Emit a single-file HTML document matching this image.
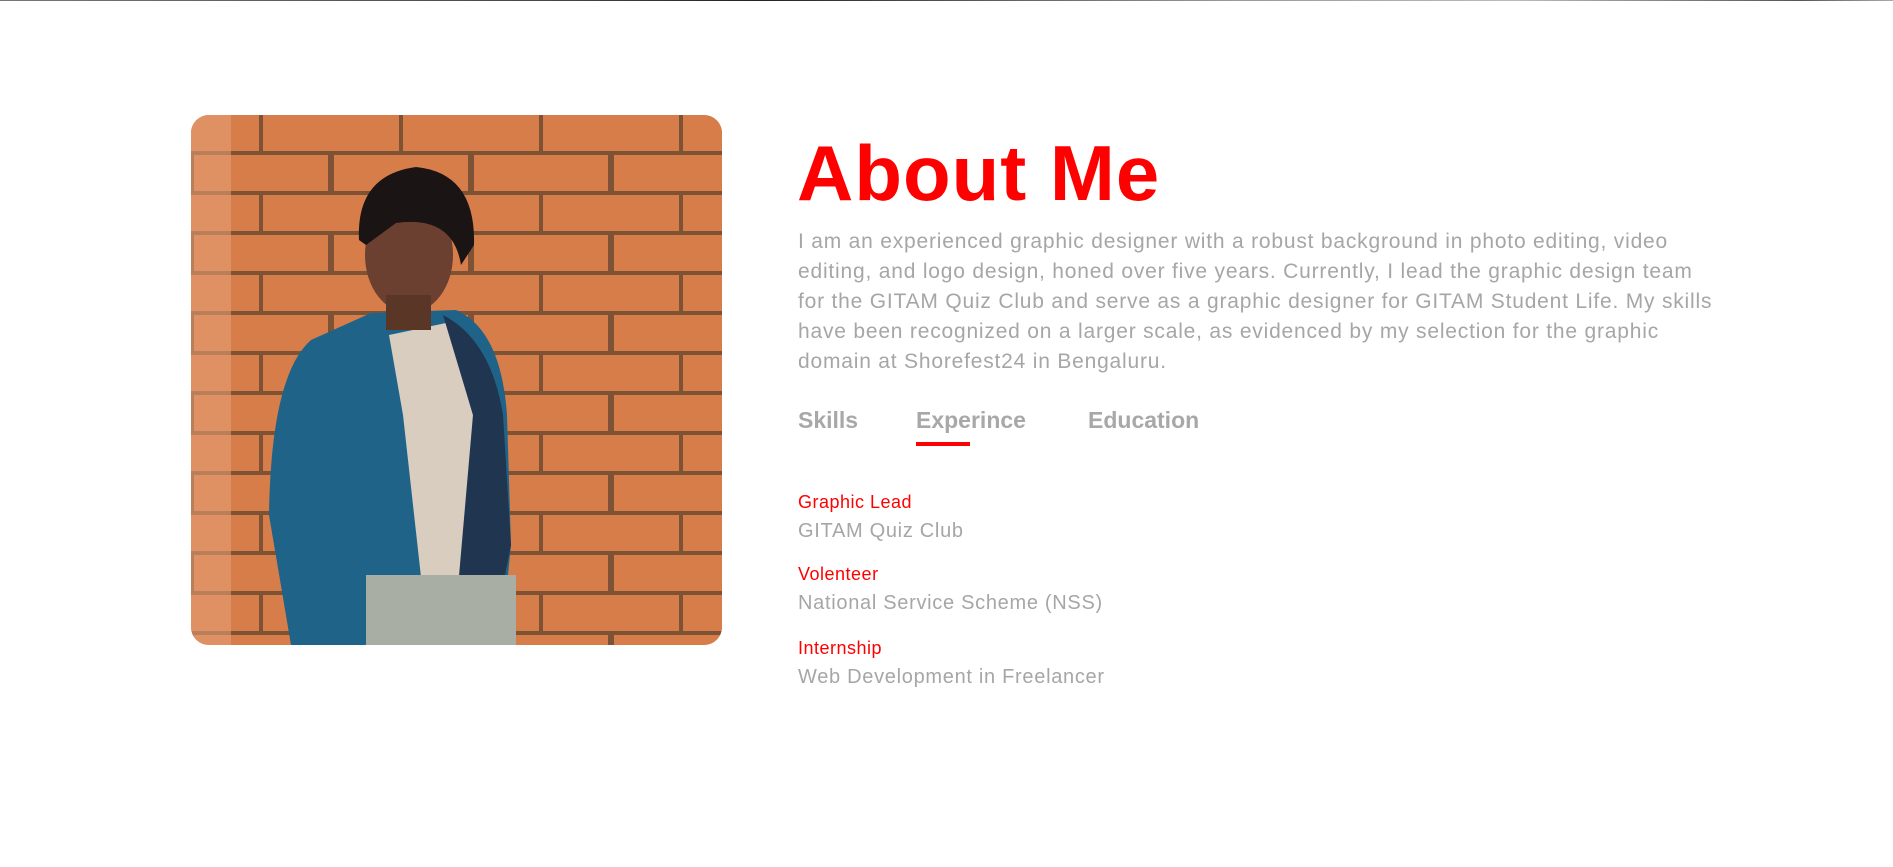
<!DOCTYPE html>
<html><head><meta charset="utf-8"><style>
*{margin:0;padding:0;box-sizing:border-box}
body{width:1893px;height:867px;background:#fff;position:relative;overflow:hidden;font-family:"Liberation Sans",sans-serif}
.top{position:absolute;left:0;top:0;width:1893px;height:1px;background:linear-gradient(90deg,#777,#444 30%,#222 40%,#999 65%,#bbb 80%,#555 95%,#aaa)}
.photo{position:absolute;left:191px;top:115px;width:531px;height:530px;border-radius:18px;overflow:hidden;background:#d9824e}
.abs{position:absolute;white-space:nowrap}
h1{position:absolute;left:797px;top:128px;font-size:78px;letter-spacing:1px;font-weight:700;color:#ff0000;line-height:90px;white-space:nowrap}
.p{left:798px;top:227px;font-size:21px;letter-spacing:0.8px;line-height:30px;color:#a6a6a6}
.tab{top:406px;font-size:23px;font-weight:700;color:#a8a8a8;line-height:28px}
.ul{position:absolute;left:916px;top:442px;width:54px;height:4px;background:#ff0000}
.r{font-size:18px;color:#ff0000;line-height:22px;letter-spacing:0.5px}
.g{font-size:20px;color:#a6a6a6;line-height:24px;letter-spacing:0.7px}
</style></head><body>
<div class="top"></div>
<div class="photo">
<svg width="531" height="530" viewBox="0 0 531 530" style="position:absolute;left:0;top:0">
<defs>
<pattern id="b" width="140" height="80" patternUnits="userSpaceOnUse">
<rect width="140" height="80" fill="#d67d4a"/>
<rect x="0" y="36" width="140" height="4" fill="#7e5234"/>
<rect x="0" y="76" width="140" height="4" fill="#7e5234"/>
<rect x="68" y="0" width="4" height="40" fill="#7e5234"/>
<rect x="0" y="40" width="3" height="40" fill="#7e5234"/>
<rect x="137" y="40" width="3" height="40" fill="#7e5234"/>
</pattern>
</defs>
<rect width="531" height="530" fill="url(#b)"/>
<rect x="0" y="0" width="40" height="530" fill="#eaa27a" opacity=".55"/>
<path d="M100 530 L78 400 Q80 260 120 225 L180 198 L265 195 Q310 215 316 300 L320 430 L310 530 Z" fill="#1f6488"/>
<path d="M198 220 L255 208 L282 300 L280 470 L232 480 L212 300 Z" fill="#d8cdbf"/>
<path d="M252 200 Q300 225 312 300 L320 430 L300 530 L262 530 L282 300 Z" fill="#1f3550"/>
<ellipse cx="218" cy="140" rx="44" ry="58" fill="#6b4030"/>
<path d="M168 125 Q165 60 225 52 Q285 58 283 130 L270 150 Q262 100 205 108 L175 130 Z" fill="#1a1414"/>
<rect x="195" y="180" width="45" height="35" fill="#5a3626"/>
<rect x="175" y="460" width="150" height="70" fill="#a9aea4"/>
</svg>
</div>
<h1>About Me</h1>
<div class="abs p">I am an experienced graphic designer with a robust background in photo editing, video<br>editing, and logo design, honed over five years. Currently, I lead the graphic design team<br>for the GITAM Quiz Club and serve as a graphic designer for GITAM Student Life. My skills<br>have been recognized on a larger scale, as evidenced by my selection for the graphic<br>domain at Shorefest24 in Bengaluru.</div>
<div class="abs tab" style="left:798px">Skills</div>
<div class="abs tab" style="left:916px">Experince</div>
<div class="abs tab" style="left:1088px">Education</div>
<div class="ul"></div>
<div class="abs r" style="left:798px;top:491px">Graphic Lead</div>
<div class="abs g" style="left:798px;top:519px">GITAM Quiz Club</div>
<div class="abs r" style="left:798px;top:563px">Volenteer</div>
<div class="abs g" style="left:798px;top:591px">National Service Scheme (NSS)</div>
<div class="abs r" style="left:798px;top:637px">Internship</div>
<div class="abs g" style="left:798px;top:665px">Web Development in Freelancer</div>
</body></html>
